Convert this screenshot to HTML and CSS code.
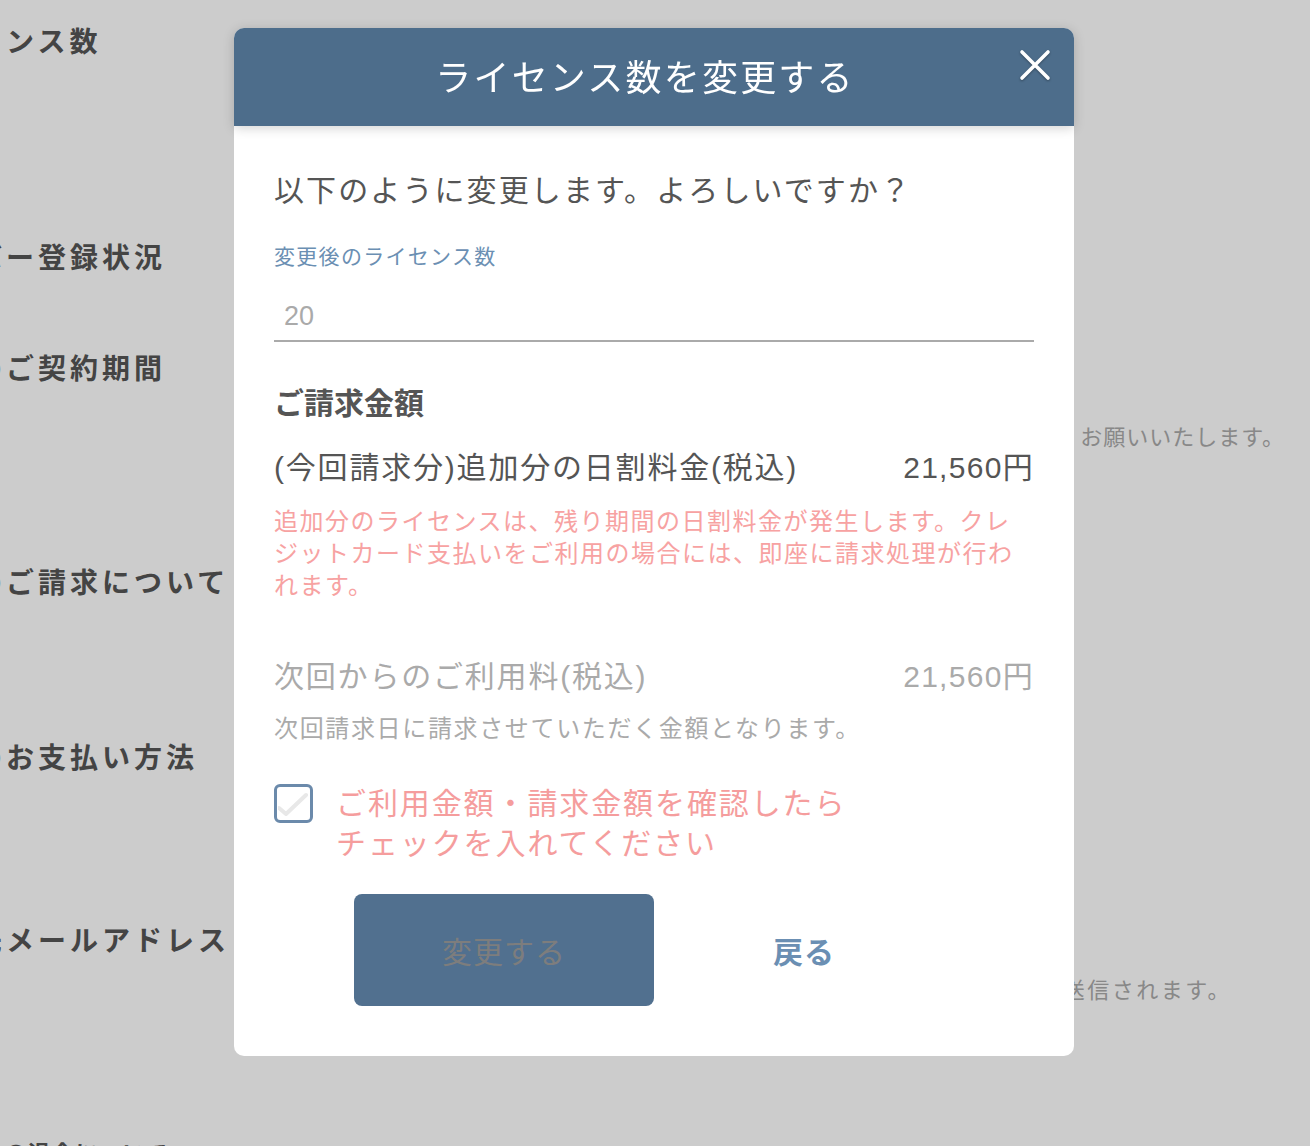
FILE: index.html
```html
<!DOCTYPE html>
<html lang="ja">
<head>
    <meta charset="UTF-8">
    <meta name="viewport" content="width=device-width, initial-scale=1.0">
    <title>ライセンス数を変更する</title>
    <link rel="stylesheet" href="styles.css">
</head>
<body>
    <div class="page">
        <div class="item item-license">
            <div class="item-label">ライセンス数</div>
            <div class="item-desc"></div>
        </div>
        <div class="item item-member">
            <div class="item-label">メンバー登録状況</div>
            <div class="item-desc"></div>
        </div>
        <div class="item item-term">
            <div class="item-label">今回のご契約期間</div>
            <div class="item-desc desc-term">ご不明な点は担当者までお問い合わせくださるよう、お願いいたします。</div>
        </div>
        <div class="item item-billing">
            <div class="item-label">今回のご請求について</div>
            <div class="item-desc"></div>
        </div>
        <div class="item item-payment">
            <div class="item-label">今回のお支払い方法</div>
            <div class="item-desc"></div>
        </div>
        <div class="item item-mail">
            <div class="item-label">送信先メールアドレス</div>
            <div class="item-desc desc-mail">請求書・領収書はこちらのメールアドレス宛に送信されます。</div>
        </div>
        <div class="item item-leave">
            <div class="item-label">サービスの退会について</div>
            <div class="item-desc desc-link">退会をご希望の場合はこちらからお手続きください</div>
        </div>
    </div>

    <div class="overlay">
        <div class="modal">
            <div class="modal-header">
                <h2 class="modal-title">ライセンス数を変更する</h2>
                <button class="modal-close" type="button" aria-label="閉じる">
                    <svg width="32" height="32" viewBox="0 0 32 32">
                        <path d="M3 3 L29 29 M29 3 L3 29" stroke="#fff" stroke-width="3.6" stroke-linecap="round" fill="none"/>
                    </svg>
                </button>
            </div>
            <div class="modal-body">
                <p class="question">以下のように変更します。よろしいですか？</p>

                <label class="field-label" for="count">変更後のライセンス数</label>
                <div class="field-input" id="count">20</div>

                <h3 class="section-title">ご請求金額</h3>
                <div class="price-row">
                    <span>(今回請求分)追加分の日割料金(税込)</span>
                    <span class="price">21,560円</span>
                </div>
                <p class="note">追加分のライセンスは、残り期間の日割料金が発生します。クレジットカード支払いをご利用の場合には、即座に請求処理が行われます。</p>

                <div class="price-row price-row-next">
                    <span>次回からのご利用料(税込)</span>
                    <span class="price">21,560円</span>
                </div>
                <p class="sub">次回請求日に請求させていただく金額となります。</p>

                <label class="agree">
                    <span class="checkbox">
                        <svg width="32" height="32" viewBox="0 0 32 32">
                            <path d="M1 20 L8 26 L28 7" stroke="#e8e8e8" stroke-width="4" stroke-linecap="round" stroke-linejoin="round" fill="none"/>
                        </svg>
                    </span>
                    <span class="agree-text">ご利用金額・請求金額を確認したら<br>チェックを入れてください</span>
                </label>

                <div class="actions">
                    <button class="btn btn-primary" type="button" disabled>変更する</button>
                    <button class="btn btn-back" type="button">戻る</button>
                </div>
            </div>
        </div>
    </div>
</body>
</html>
```

FILE: styles.css
```css
body {
    margin: 0;
    padding: 0;
    width: 1310px;
    height: 1146px;
    overflow: hidden;
    background-color: #fff;
    font-family: "Noto Sans CJK JP", "Noto Sans", sans-serif;
    color: #555;
}
.page {
    margin-left: -90px;
    padding-top: 20px;
}
.item {
    display: flex;
    align-items: flex-start;
}
.item-license { height: 216px; }
.item-member { height: 111px; }
.item-term { height: 214px; }
.item-billing { height: 175px; }
.item-payment { height: 183px; }
.item-mail { height: 216px; }
.item-leave { height: 60px; }
.item-label {
    width: 364px;
    flex-shrink: 0;
    font-size: 28px;
    line-height: 40px;
    font-weight: bold;
    letter-spacing: 4px;
    color: #555;
    white-space: nowrap;
}
.item-leave .item-label {
    width: 295px;
    font-size: 22px;
    line-height: 32px;
    letter-spacing: 1.6px;
}
.item-desc {
    width: 1011px;
    font-size: 22px;
    line-height: 32px;
    letter-spacing: 1px;
    color: #aaa;
    text-align: right;
    white-space: nowrap;
}
.desc-term {
    padding-top: 72px;
}
.desc-mail {
    padding-top: 53px;
    width: 958px;
    letter-spacing: 2.5px;
}
.desc-link {
    text-align: left;
    padding-top: 6px;
    color: #5c86c9;
}
.overlay {
    position: fixed;
    top: 0;
    left: 0;
    right: 0;
    bottom: 0;
    background-color: rgba(0, 0, 0, 0.2);
    display: flex;
    justify-content: center;
    align-items: flex-start;
    padding-top: 28px;
}
.modal {
    width: 840px;
    margin-left: -2px;
    background-color: #fff;
    border-radius: 10px;
}
.modal-header {
    position: relative;
    height: 98px;
    padding-right: 18px;
    background-color: #4d6d8b;
    border-radius: 10px 10px 0 0;
    box-shadow: 0 2px 12px rgba(0, 0, 0, 0.18);
    display: flex;
    align-items: center;
    justify-content: center;
}
.modal-title {
    margin: 0;
    font-size: 36px;
    font-weight: normal;
    letter-spacing: 2.2px;
    color: #fff;
    margin-top: -4px;
}
.modal-close {
    position: absolute;
    top: 21px;
    right: 23px;
    width: 32px;
    height: 32px;
    padding: 0;
    border: none;
    background: none;
    cursor: pointer;
    filter: drop-shadow(0 1px 1px rgba(0, 0, 0, 0.35));
}
.modal-close svg {
    display: block;
}
.modal-body {
    padding: 45px 40px 50px 40px;
    font-family: "Liberation Sans", "Noto Sans CJK JP", sans-serif;
}
.question {
    margin: 0;
    font-size: 30px;
    line-height: 40px;
    letter-spacing: 2.1px;
    color: #555;
}
.field-label {
    display: block;
    margin-top: 32px;
    font-size: 21px;
    line-height: 28px;
    letter-spacing: 1.3px;
    color: #6b8fb3;
}
.field-input {
    margin-top: 27px;
    padding: 0 0 6px 10px;
    font-size: 27px;
    line-height: 36px;
    color: #aaa;
    border-bottom: 2px solid #aaa;
}
.section-title {
    margin: 42px 0 0 0;
    font-size: 30px;
    line-height: 40px;
    font-weight: bold;
    letter-spacing: 0;
    color: #555;
}
.price-row {
    margin-top: 24px;
    display: flex;
    justify-content: space-between;
    font-size: 30px;
    line-height: 40px;
    letter-spacing: 1.8px;
    color: #555;
}
.price-row-next {
    margin-top: 55px;
    color: #aaa;
}
.price {
    letter-spacing: 1.3px;
}
.note {
    margin: 18px 0 0 0;
    font-size: 24px;
    line-height: 32px;
    letter-spacing: 1.5px;
    color: #f7a2a2;
}
.sub {
    margin: 16px 0 0 0;
    font-size: 24px;
    line-height: 32px;
    letter-spacing: 1.65px;
    color: #aaa;
}
.agree {
    margin-top: 39px;
    display: flex;
    align-items: flex-start;
    cursor: pointer;
}
.checkbox {
    margin-top: 0;
    width: 39px;
    height: 39px;
    box-sizing: border-box;
    border: 3px solid #6b8aab;
    border-radius: 6px;
    display: flex;
    align-items: center;
    justify-content: center;
    flex-shrink: 0;
}
.checkbox svg {
    display: block;
}
.agree-text {
    margin-left: 23px;
    font-size: 30px;
    line-height: 40px;
    letter-spacing: 1.9px;
    color: #f59d9d;
}
.actions {
    margin-top: 30px;
    display: flex;
    justify-content: center;
}
.btn {
    width: 300px;
    height: 112px;
    font-family: "Noto Sans CJK JP", sans-serif;
    font-size: 30px;
    letter-spacing: 1px;
    border: none;
    border-radius: 8px;
    cursor: pointer;
}
.btn-primary {
    background-color: #51708f;
    color: #7d7d7d;
}
.btn-back {
    background: none;
    color: #6b8fb3;
    font-weight: bold;
}
```
